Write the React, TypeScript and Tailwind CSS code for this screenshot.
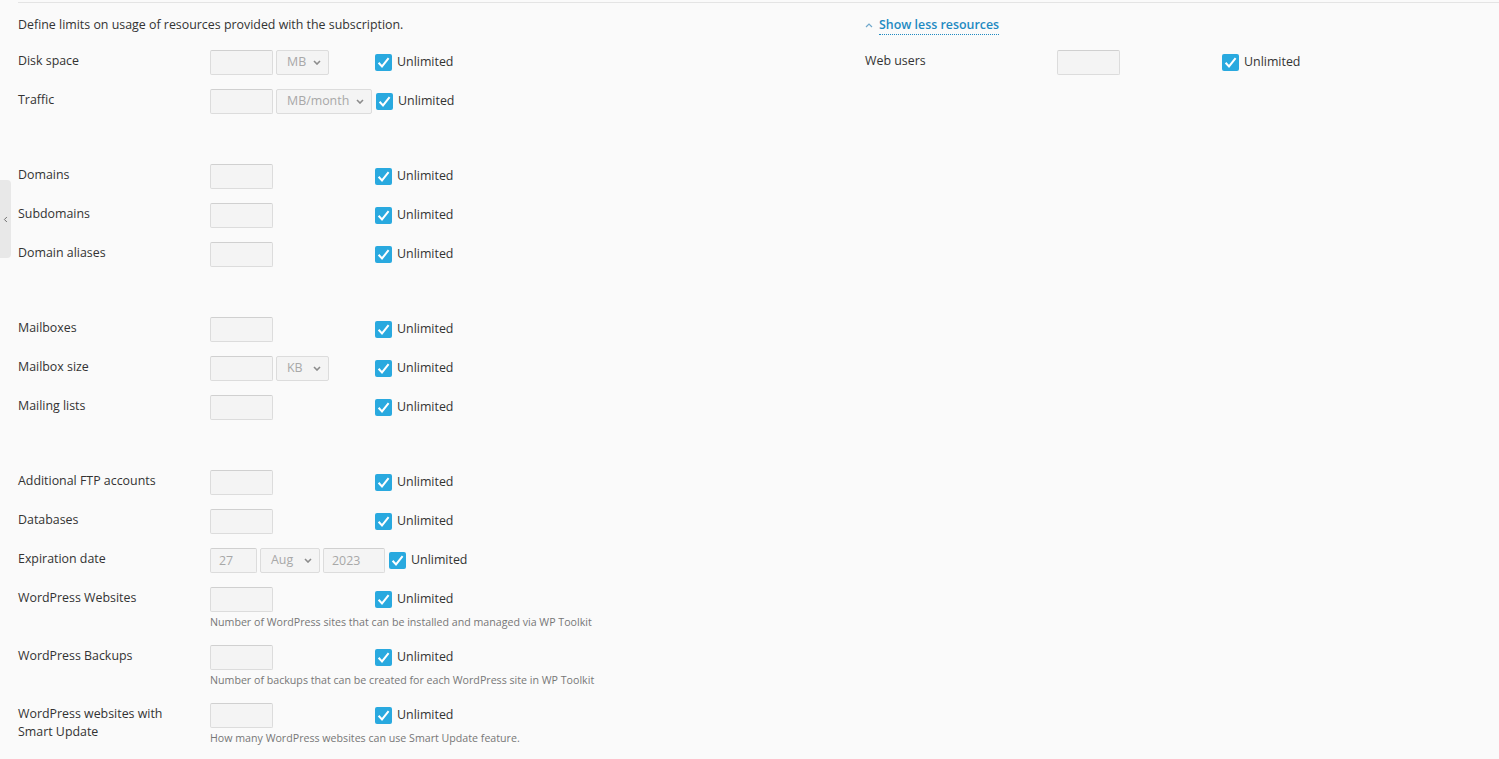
import { ChevronLeft } from "lucide-react";
import type { ReactNode } from "react";

function TextBox({ w = "w-[63px]", value }: { w?: string; value?: string }) {
  return (
    <div
      className={`${w} h-[25px] shrink-0 rounded-[2px] border border-[#dcdcdc] border-t-[#d0d0d0] bg-[#f4f4f4] px-[8px] leading-[23px] text-[#a8a8a8]`}
    >
      {value}
    </div>
  );
}

function SelectBox({ w, value }: { w: string; value: string }) {
  return (
    <div
      className={`${w} h-[25px] shrink-0 rounded-[2px] border border-[#dcdcdc] bg-[#f4f4f4] pl-[10px] pr-[7px] flex items-center justify-between text-[#a8a8a8]`}
    >
      <span>{value}</span>
      <svg viewBox="0 0 8 5" className="w-[8px] h-[5px]">
        <path d="M1 1l3 3 3-3" fill="none" stroke="#8c8c8c" strokeWidth="1.6" />
      </svg>
    </div>
  );
}

function Unlimited() {
  return (
    <div className="flex items-center">
      <div className="w-[17px] h-[17px] rounded-[2px] bg-[#29a9df]">
        <svg viewBox="0 0 17 17" className="w-[17px] h-[17px]">
          <path d="M3.6 8.8l3.4 3.6 6.6-8.2" fill="none" stroke="#fff" strokeWidth="2" />
        </svg>
      </div>
      <span className="ml-[5px] text-[#333]">Unlimited</span>
    </div>
  );
}

function Row({
  label,
  children,
  hint,
}: {
  label: ReactNode;
  children?: ReactNode;
  hint?: string;
}) {
  return (
    <div className={`flex ${hint ? "mb-[15px]" : "mb-[14px]"}`}>
      <div className="w-[192px] shrink-0 pt-[2px] leading-[18px] text-[#333]">{label}</div>
      <div>
        <div className="flex items-center">
          <div className="min-w-[165px] pr-[4px] flex gap-[3px]">{children ?? <TextBox />}</div>
          <Unlimited />
        </div>
        {hint && (
          <div className="mt-[2px] text-[10.65px] leading-[16px] text-[#777]">{hint}</div>
        )}
      </div>
    </div>
  );
}

export default function App() {
  return (
    <div className="relative min-h-screen bg-[#fafafa] font-['Open_Sans',sans-serif] text-[12.4px] text-[#333]">
      <div className="absolute left-0 top-[180px] w-[11px] h-[78px] rounded-r-[4px] bg-[#e8e8e8] flex items-center justify-center">
        <ChevronLeft className="w-[9px] h-[9px] text-[#666]" strokeWidth={2.5} />
      </div>
      <div className="pl-[18px] pt-[2px]">
        <div className="border-t border-[#e4e4e4]" />
        <div className="flex">
          <div className="w-[847px] shrink-0">
            <p className="mt-[13px] mb-[16px] leading-[18px]">
              Define limits on usage of resources provided with the subscription.
            </p>
            <div className="pb-[36px]">
              <Row label="Disk space">
                <TextBox />
                <SelectBox w="w-[53px]" value="MB" />
              </Row>
              <Row label="Traffic">
                <TextBox />
                <SelectBox w="w-[96px]" value="MB/month" />
              </Row>
            </div>
            <div className="pb-[36px]">
              <Row label="Domains" />
              <Row label="Subdomains" />
              <Row label="Domain aliases" />
            </div>
            <div className="pb-[36px]">
              <Row label="Mailboxes" />
              <Row label="Mailbox size">
                <TextBox />
                <SelectBox w="w-[53px]" value="KB" />
              </Row>
              <Row label="Mailing lists" />
            </div>
            <div>
              <Row label="Additional FTP accounts" />
              <Row label="Databases" />
              <Row label="Expiration date">
                <TextBox w="w-[47px]" value="27" />
                <SelectBox w="w-[60px]" value="Aug" />
                <TextBox w="w-[62px]" value="2023" />
              </Row>
              <Row
                label="WordPress Websites"
                hint="Number of WordPress sites that can be installed and managed via WP Toolkit"
              />
              <Row
                label="WordPress Backups"
                hint="Number of backups that can be created for each WordPress site in WP Toolkit"
              />
              <Row
                label={
                  <>
                    WordPress websites with
                    <br />
                    Smart Update
                  </>
                }
                hint="How many WordPress websites can use Smart Update feature."
              />
            </div>
          </div>
          <div className="flex-1">
            <div className="mt-[12px] mb-[15px] flex items-center">
              <svg viewBox="0 0 8 5" className="w-[8px] h-[5px]">
                <path d="M1 4l3-3 3 3" fill="none" stroke="#6fa8cc" strokeWidth="1.2" />
              </svg>
              <span className="ml-[6px] font-semibold text-[#1f8ac2] leading-[19px] border-b border-dotted border-[#1f8ac2]">
                Show less resources
              </span>
            </div>
            <Row label="Web users" />
          </div>
        </div>
      </div>
    </div>
  );
}
